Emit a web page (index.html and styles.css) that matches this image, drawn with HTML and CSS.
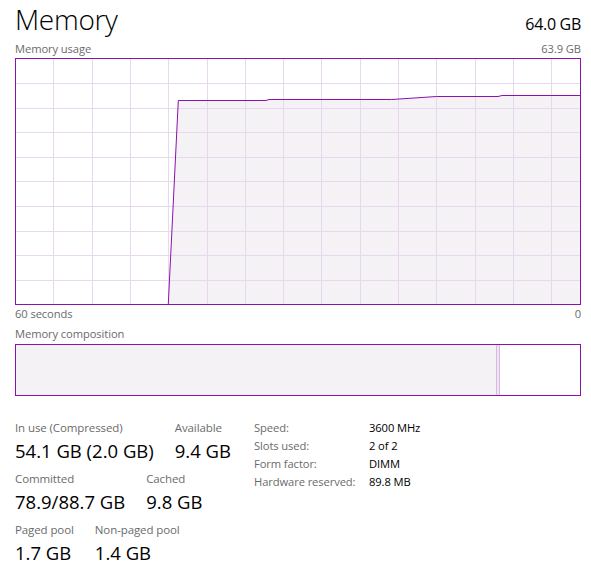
FILE: index.html
```html
<!DOCTYPE html>
<html>
<head>
<meta charset="utf-8">
<link rel="stylesheet" href="styles.css">
</head>
<body>
<div class="page">
  <div class="header">
    <div class="title">Memory</div>
    <div class="total">64.0 GB</div>
  </div>
  <div class="caption-row first">
    <span>Memory usage</span>
    <span>63.9 GB</span>
  </div>
  <svg class="chart" width="566" height="247" viewBox="0 0 566 247">
    <polygon class="area" points="153.3,246 163.3,42.5 251,42.5 254,41.5 376.7,41.5 421.7,38.5 483,38.5 487,37.5 565,37.5 565,246"/>
    <g class="grid">
      <line x1="38.5" y1="1" x2="38.5" y2="246"/>
      <line x1="77.5" y1="1" x2="77.5" y2="246"/>
      <line x1="115.5" y1="1" x2="115.5" y2="246"/>
      <line x1="153.5" y1="1" x2="153.5" y2="246"/>
      <line x1="192.5" y1="1" x2="192.5" y2="246"/>
      <line x1="230.5" y1="1" x2="230.5" y2="246"/>
      <line x1="268.5" y1="1" x2="268.5" y2="246"/>
      <line x1="306.5" y1="1" x2="306.5" y2="246"/>
      <line x1="345.5" y1="1" x2="345.5" y2="246"/>
      <line x1="383.5" y1="1" x2="383.5" y2="246"/>
      <line x1="421.5" y1="1" x2="421.5" y2="246"/>
      <line x1="460.5" y1="1" x2="460.5" y2="246"/>
      <line x1="498.5" y1="1" x2="498.5" y2="246"/>
      <line x1="536.5" y1="1" x2="536.5" y2="246"/>
      <line x1="1" y1="25.5" x2="565" y2="25.5"/>
      <line x1="1" y1="50.5" x2="565" y2="50.5"/>
      <line x1="1" y1="74.5" x2="565" y2="74.5"/>
      <line x1="1" y1="99.5" x2="565" y2="99.5"/>
      <line x1="1" y1="123.5" x2="565" y2="123.5"/>
      <line x1="1" y1="148.5" x2="565" y2="148.5"/>
      <line x1="1" y1="173.5" x2="565" y2="173.5"/>
      <line x1="1" y1="197.5" x2="565" y2="197.5"/>
      <line x1="1" y1="222.5" x2="565" y2="222.5"/>
    </g>
    <polyline class="trace" points="153.3,246 163.3,42.5 251,42.5 254,41.5 376.7,41.5 421.7,38.5 483,38.5 487,37.5 565,37.5"/>
    <rect class="frame" x="0.5" y="0.5" width="565" height="246"/>
  </svg>
  <div class="caption-row axis">
    <span>60 seconds</span>
    <span>0</span>
  </div>
  <div class="caption-row comp-label">
    <span>Memory composition</span>
  </div>
  <div class="composition">
    <div class="seg in-use"></div>
    <div class="seg modified"></div>
    <div class="seg standby"></div>
  </div>
  <div class="stats">
    <div class="stats-left">
      <div class="stat-row">
        <div class="stat"><div class="label">In use (Compressed)</div><div class="value">54.1 GB (2.0 GB)</div></div>
        <div class="stat"><div class="label">Available</div><div class="value">9.4 GB</div></div>
      </div>
      <div class="stat-row">
        <div class="stat"><div class="label">Committed</div><div class="value">78.9/88.7 GB</div></div>
        <div class="stat"><div class="label">Cached</div><div class="value">9.8 GB</div></div>
      </div>
      <div class="stat-row">
        <div class="stat"><div class="label">Paged pool</div><div class="value">1.7 GB</div></div>
        <div class="stat"><div class="label">Non-paged pool</div><div class="value">1.4 GB</div></div>
      </div>
    </div>
    <div class="stats-right">
      <div class="kv"><span class="k">Speed:</span><span class="v">3600 MHz</span></div>
      <div class="kv"><span class="k">Slots used:</span><span class="v">2 of 2</span></div>
      <div class="kv"><span class="k">Form factor:</span><span class="v">DIMM</span></div>
      <div class="kv"><span class="k">Hardware reserved:</span><span class="v">89.8 MB</span></div>
    </div>
  </div>
</div>
</body>
</html>
```
FILE: styles.css
```css
html, body {
  margin: 0;
  padding: 0;
  background: #ffffff;
}
body {
  font-family: "Open Sans", "Noto Sans", sans-serif;
  color: #000;
}
.page {
  width: 566px;
  padding: 1px 10px 0 15px;
}
.header {
  display: flex;
  justify-content: space-between;
  align-items: baseline;
  height: 38px;
}
.title {
  font-size: 28px;
  font-weight: 300;
  line-height: 36px;
  letter-spacing: -0.3px;
}
.total {
  font-size: 16px;
  line-height: 20px;
  letter-spacing: -0.3px;
}
.caption-row {
  display: flex;
  justify-content: space-between;
  font-size: 11.2px;
  line-height: 16px;
  color: #6b6b6b;
  letter-spacing: -0.1px;
}
.caption-row.first {
  margin-top: 2px;
  margin-bottom: 1px;
}
.caption-row.axis {
  padding-top: 1px;
}
.comp-label {
  margin-top: 4px;
  margin-bottom: 2px;
}
.chart {
  display: block;
}
.area {
  fill: #f4f2f4;
}
.grid line {
  stroke: #e8d8ee;
  stroke-width: 1;
}
.trace {
  fill: none;
  stroke: #8b12ae;
  stroke-width: 1;
}
.frame {
  fill: none;
  stroke: #8b12ae;
  stroke-width: 1;
}
.composition {
  display: flex;
  height: 50px;
  border: 1px solid #8b12ae;
}
.seg.in-use {
  flex: 0 0 480px;
  background: #f4f2f4;
}
.seg.modified {
  flex: 0 0 2px;
  background: #efe4f2;
  border-left: 1px solid #d9b9e3;
  border-right: 1px solid #d9b9e3;
}
.seg.standby {
  flex: 1;
  background: #ffffff;
}
.stats {
  display: flex;
  margin-top: 24px;
}
.stats-left {
  width: 239px;
}
.stat-row {
  display: flex;
  gap: 21px;
  margin-bottom: 8px;
}
.label {
  font-size: 11.5px;
  line-height: 16px;
  color: #6b6b6b;
  letter-spacing: -0.1px;
}
.value {
  font-size: 18.5px;
  line-height: 24px;
  margin-top: 3px;
}
.kv {
  display: flex;
  font-size: 11.2px;
  line-height: 18px;
  letter-spacing: -0.1px;
}
.kv:first-child {
  margin-top: -1px;
}
.k {
  width: 115px;
  color: #6b6b6b;
}
.v {
  color: #000;
}
```
